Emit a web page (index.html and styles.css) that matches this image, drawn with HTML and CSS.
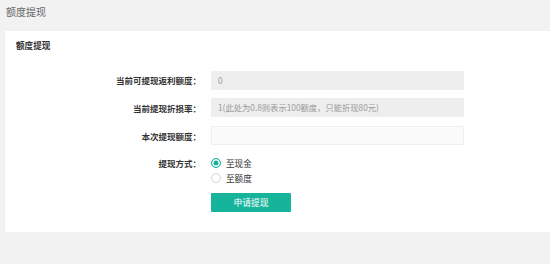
FILE: index.html
```html
<!DOCTYPE html>
<html lang="zh-CN">
<head>
<meta charset="utf-8">
<title>额度提现</title>
<link rel="stylesheet" href="styles.css">
</head>
<body>
<div class="page-title">额度提现</div>
<div class="card">
  <div class="card-header">额度提现</div>
  <form class="form">
    <div class="form-row">
      <label class="form-label">当前可提现返利额度：</label>
      <div class="input input-disabled">0</div>
    </div>
    <div class="form-row">
      <label class="form-label">当前提现折损率：</label>
      <div class="input input-disabled">1(此处为0.8则表示100额度，只能折现80元)</div>
    </div>
    <div class="form-row">
      <label class="form-label">本次提现额度：</label>
      <div class="input input-empty"></div>
    </div>
    <div class="form-row form-row-radio">
      <label class="form-label">提现方式：</label>
      <div class="radio-group">
        <div class="radio-option"><span class="radio radio-checked"></span><span>至现金</span></div>
        <div class="radio-option"><span class="radio"></span><span>至额度</span></div>
      </div>
    </div>
    <div class="form-row form-row-btn">
      <span></span>
      <div class="btn">申请提现</div>
    </div>
  </form>
</div>
</body>
</html>
```

FILE: styles.css
```css
html, body {
  margin: 0;
  padding: 0;
}
body {
  background: #f2f2f2;
  font-family: "Noto Sans CJK SC", "Liberation Sans", sans-serif;
  overflow: hidden;
}
.page-title {
  height: 31px;
  line-height: 23px;
  padding-left: 6px;
  font-size: 10px;
  color: #666;
}
.card {
  margin: 0 -20px 0 5px;
  background: #fff;
  height: 201px;
  box-sizing: border-box;
  box-shadow: 0 1px 2px rgba(0, 0, 0, 0.06);
}
.card-header {
  height: 28px;
  line-height: 28px;
  padding-left: 11px;
  font-size: 8.6px;
  font-weight: bold;
  color: #333;
}
.form {
  margin: 11.7px 0 0 0;
}
.form-row {
  display: grid;
  grid-template-columns: 196px 253px;
  column-gap: 10px;
  align-items: center;
  margin-bottom: 8.7px;
}
.form-label {
  text-align: right;
  font-size: 8.5px;
  font-weight: bold;
  color: #333;
  white-space: nowrap;
}
.input {
  height: 19px;
  line-height: 19px;
  box-sizing: border-box;
  padding-left: 7px;
  font-size: 8.3px;
  color: #999;
  white-space: nowrap;
}
.input-disabled {
  background: #eeeeee;
}
.input-empty {
  background: #fbfbfb;
  border: 1px solid #f0f0f0;
}
.form-row-radio {
  align-items: start;
  margin-top: 10.8px;
  margin-bottom: 7.5px;
}
.form-row-radio .form-label {
  line-height: 15px;
}
.radio-group {
  display: flex;
  flex-direction: column;
}
.radio-option {
  display: flex;
  align-items: center;
  height: 15px;
  font-size: 8.6px;
  color: #333;
}
.radio {
  width: 10px;
  height: 10px;
  box-sizing: border-box;
  border-radius: 50%;
  border: 1px solid #d2d2d2;
  margin-right: 5px;
  background: #fff;
}
.radio-checked {
  border-color: #16b39a;
  background: #16b39a;
  box-shadow: inset 0 0 0 1.5px #fff;
}
.form-row-btn {
  margin-bottom: 0;
}
.btn {
  width: 80px;
  height: 19px;
  line-height: 19px;
  text-align: center;
  background: #17b49c;
  color: #fff;
  font-size: 8.8px;
  border-radius: 1px;
}
```
